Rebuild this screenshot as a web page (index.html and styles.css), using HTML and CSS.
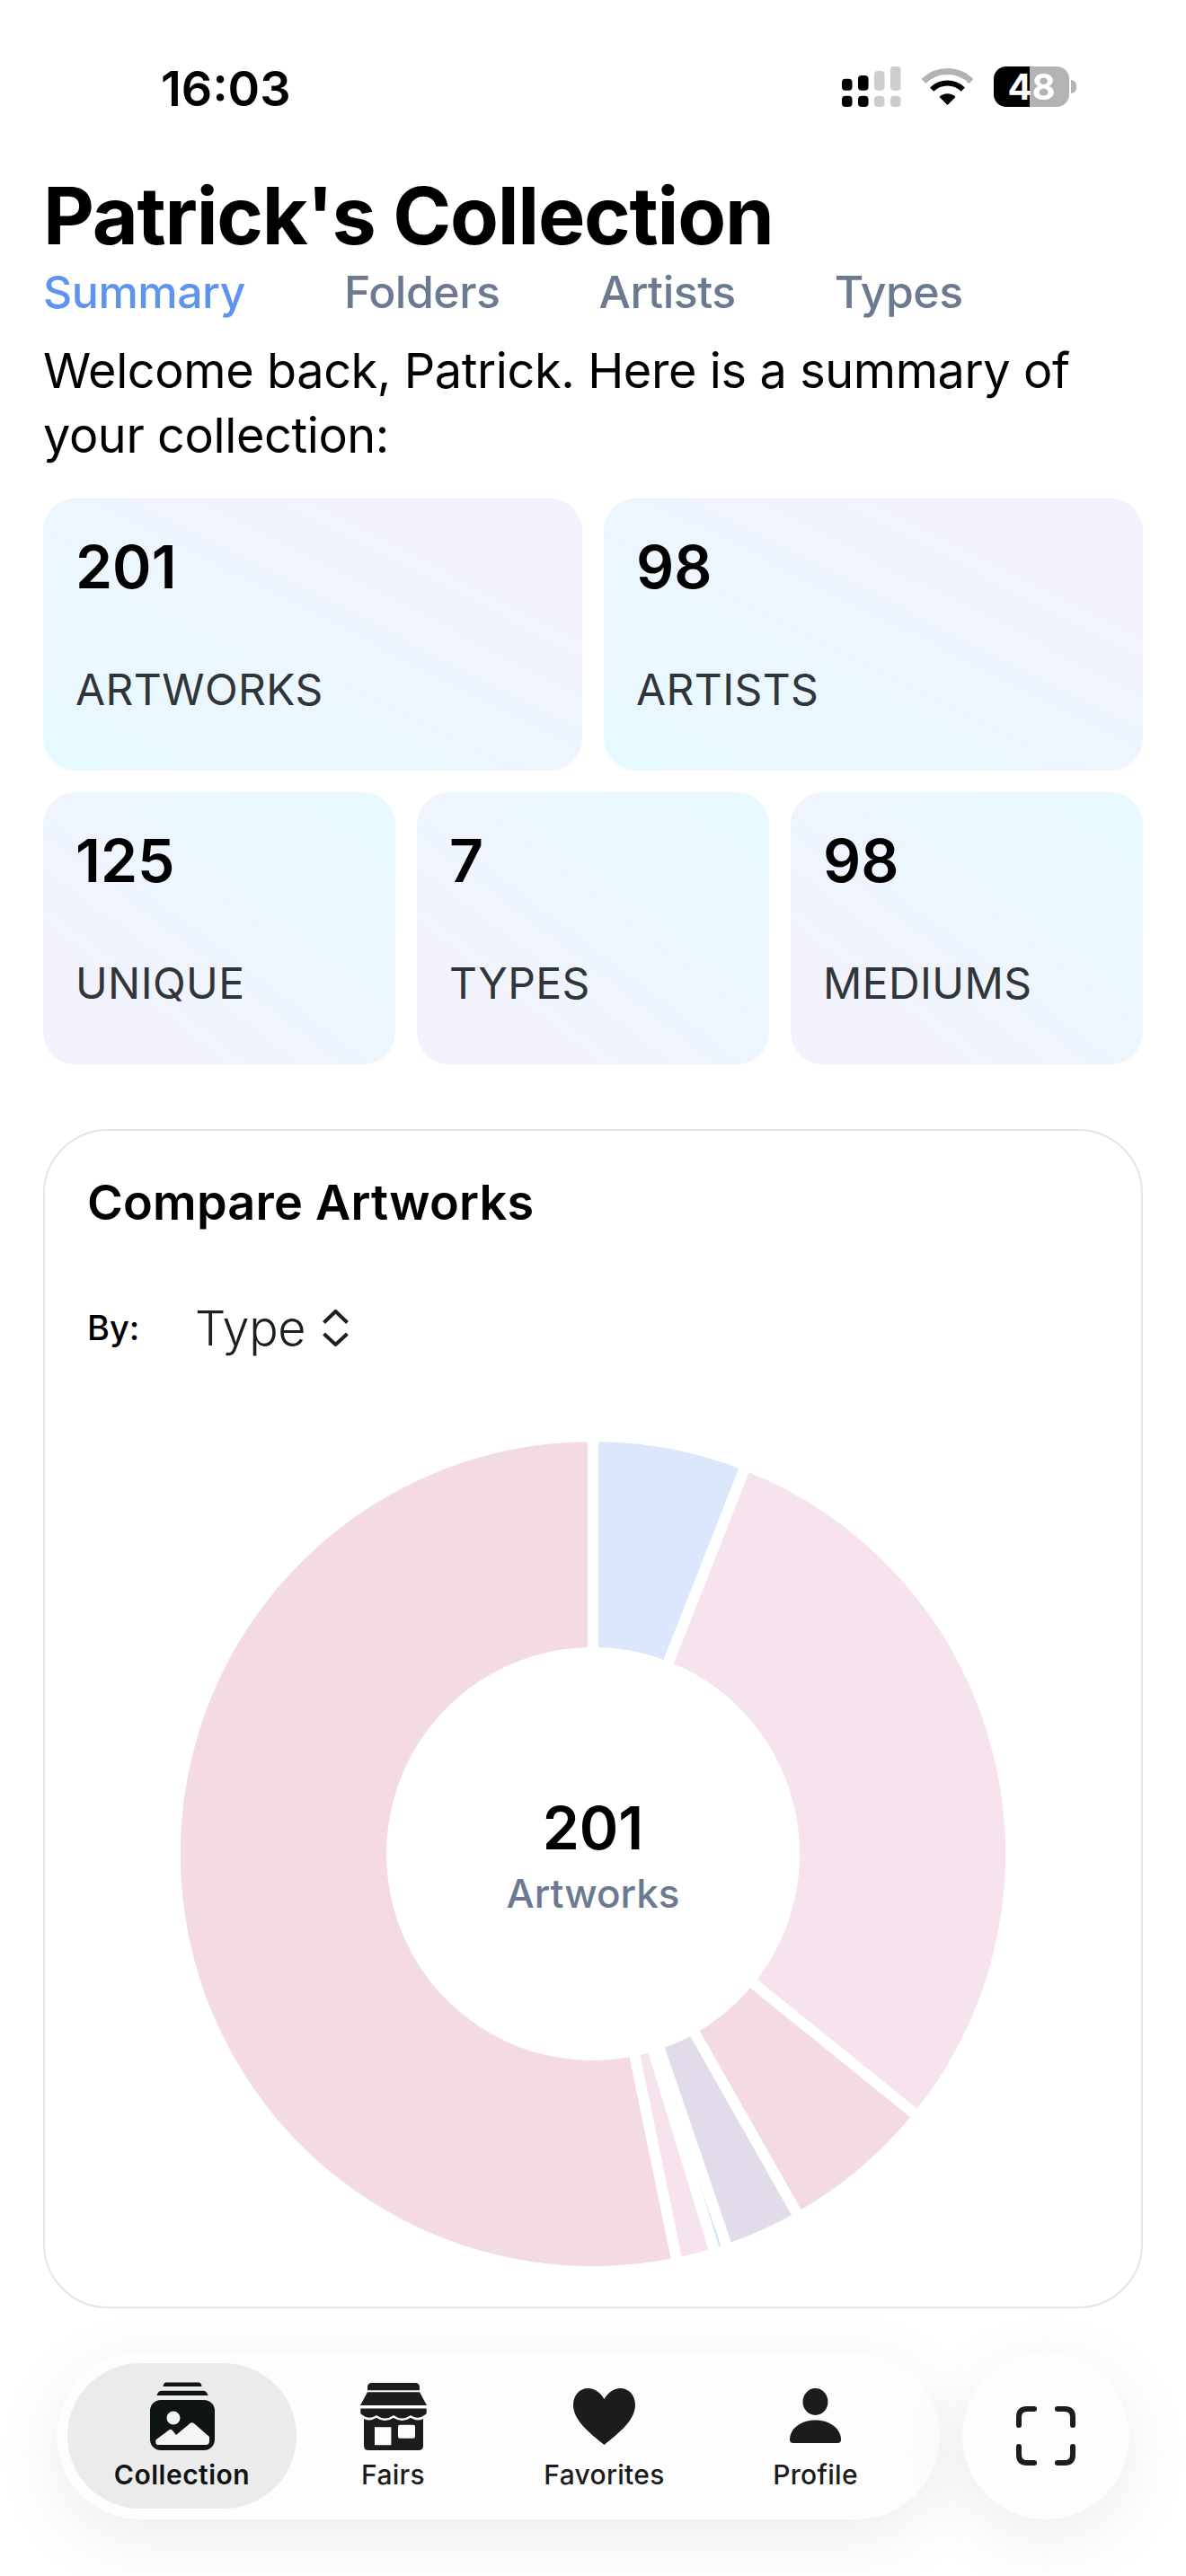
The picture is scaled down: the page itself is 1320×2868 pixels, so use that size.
FILE: index.html
```html
<!DOCTYPE html>
<html lang="en">
<head>
  <meta charset="UTF-8" />
  <meta name="viewport" content="width=device-width, initial-scale=1.0"/>
  <title>Patrick's Collection</title>
  <link rel="stylesheet" href="styles.css">
</head>
<body>
  <div class="status-bar">
    <span class="status-time">16:03</span>
    <div class="status-icons">
      <svg class="signal" width="66" height="45" viewBox="0 0 66 45">
        <rect x="0" y="13.7" width="11.5" height="13" rx="4"/>
        <rect x="18" y="10" width="11.5" height="16.7" rx="4"/>
        <rect class="dim" x="36" y="5" width="11.5" height="21.7" rx="4"/>
        <rect class="dim" x="54" y="0" width="11.5" height="26.7" rx="4"/>
        <rect x="0" y="32.7" width="11.5" height="12.3" rx="4"/>
        <rect x="18" y="32.7" width="11.5" height="12.3" rx="4"/>
        <rect class="dim" x="36" y="32.7" width="11.5" height="12.3" rx="4"/>
        <rect class="dim" x="54" y="32.7" width="11.5" height="12.3" rx="4"/>
      </svg>
      <svg class="wifi" width="57" height="41" viewBox="0 0 57 41">
        <path class="wifi-far" d="M2 14.5A37.5 37.5 0 0 1 55 14.5"/>
        <path class="wifi-near" d="M11.2 23.7A24.5 24.5 0 0 1 45.8 23.7"/>
        <path d="M28.5 41L19.5 32A12.7 12.7 0 0 1 37.5 32Z"/>
      </svg>
      <div class="battery"><span>48</span></div>
    </div>
  </div>

  <h1 class="page-title">Patrick's Collection</h1>
  <nav class="top-tabs">
    <a class="top-tab top-tab-active">Summary</a>
    <a class="top-tab">Folders</a>
    <a class="top-tab">Artists</a>
    <a class="top-tab">Types</a>
  </nav>
  <p class="welcome">Welcome back, Patrick. Here is a summary of your collection:</p>

  <div class="stats stats-two">
    <div class="stat">
      <div class="stat-num">201</div>
      <div class="stat-label">ARTWORKS</div>
    </div>
    <div class="stat">
      <div class="stat-num">98</div>
      <div class="stat-label">ARTISTS</div>
    </div>
  </div>
  <div class="stats stats-three">
    <div class="stat">
      <div class="stat-num">125</div>
      <div class="stat-label">UNIQUE</div>
    </div>
    <div class="stat">
      <div class="stat-num">7</div>
      <div class="stat-label">TYPES</div>
    </div>
    <div class="stat">
      <div class="stat-num">98</div>
      <div class="stat-label">MEDIUMS</div>
    </div>
  </div>

  <section class="compare">
    <h2 class="compare-title">Compare Artworks</h2>
    <div class="compare-by">
      <span class="by-label">By:</span>
      <span class="by-value">Type</span>
      <svg class="by-chevrons" width="29" height="41" viewBox="0 0 29 41">
        <path d="M1.5 14.5L14.5 2L27.5 14.5"/>
        <path d="M1.5 27L14.5 39L27.5 27"/>
      </svg>
    </div>
    <div class="donut">
      <svg width="918" height="918" viewBox="-459 -459 918 918">
        <g class="slices">
          <path class="slice-blue" d="M0 -465A465 465 0 0 1 170.3 -432.7L82.1 -208.4A224 224 0 0 0 0 -224Z"/>
          <path class="slice-pink" d="M170.3 -432.7A465 465 0 0 1 361.6 292.3L174.2 140.8A224 224 0 0 0 82.1 -208.4Z"/>
          <path class="slice-rose" d="M361.6 292.3A465 465 0 0 1 229.3 404.5L110.5 194.9A224 224 0 0 0 174.2 140.8Z"/>
          <path class="slice-lilac" d="M229.3 404.5A465 465 0 0 1 150 440.2L72.2 212A224 224 0 0 0 110.5 194.9Z"/>
          <path class="slice-sky" d="M150 440.2A465 465 0 0 1 136 444.7L65.5 214.2A224 224 0 0 0 72.2 212Z"/>
          <path class="slice-pink" d="M136 444.7A465 465 0 0 1 93.8 455.4L45.2 219.4A224 224 0 0 0 65.5 214.2Z"/>
          <path class="slice-rose" d="M93.8 455.4A465 465 0 1 1 0 -465L0 -224A224 224 0 1 0 45.2 219.4Z"/>
        </g>
      </svg>
      <div class="donut-center">
        <div class="donut-num">201</div>
        <div class="donut-label">Artworks</div>
      </div>
    </div>
  </section>

  <div class="bottom-bar">
    <nav class="tab-bar">
      <a class="tab tab-active">
        <span class="tab-icon">
          <svg width="72" height="76" viewBox="0 0 72 76">
            <path class="ink-dark" d="M14.5 5Q15 .5 18 .5H54Q57 .5 57.5 5Z"/>
            <path class="ink-dark" d="M7.5 15Q9 9.7 13 9.7H59Q63 9.7 64.5 15Z"/>
            <rect class="ink-dark" x="0" y="20" width="72" height="56" rx="12"/>
            <circle class="ink-light" cx="26" cy="40" r="7.5"/>
            <path class="ink-light" d="M9 70Q6 70 6.3 66V64.5L21 53.5Q23 52 25 54L29 59L44 46.5Q47 44 50 47L66 61V66Q66 70 62 70Z"/>
          </svg>
        </span>
        <span class="tab-label">Collection</span>
      </a>
      <a class="tab">
        <span class="tab-icon">
          <svg width="76" height="75" viewBox="0 0 76 75">
            <path class="ink" d="M9 8.3V5Q9 0 14 0H62Q67 0 67 5V8.3Z"/>
            <path class="ink" d="M9 10.3H67L75 25H1Z"/>
            <path class="ink" fill-rule="evenodd" d="M5 38H71V70Q71 75 66 75H10Q5 75 5 70ZM17 49.3V69.3H35.4V49.3ZM45 46.7Q43 46.7 43 48.7V59.7Q43 61.7 45 61.7H60Q62 61.7 62 59.7V48.7Q62 46.7 60 46.7Z"/>
            <path class="ink ink-cut" d="M0 27.3H76V33Q76 36 73 37Q66 43 57 37.5Q47.500 44 38 37.500Q28.500 44 19 37.500Q10 43 3 37Q0 36 0 33Z"/>
          </svg>
        </span>
        <span class="tab-label">Fairs</span>
      </a>
      <a class="tab">
        <span class="tab-icon">
          <svg width="69" height="63" viewBox="0 0 69 63">
            <path class="ink" d="M34.500 63C17 49 0 35 0 18.500C0 8 7 0 16.500 0C23 0 30 4 34.500 12C39 4 46 0 52.500 0C62 0 69 8 69 18.500C69 35 52 49 34.500 63Z"/>
          </svg>
        </span>
        <span class="tab-label">Favorites</span>
      </a>
      <a class="tab">
        <span class="tab-icon">
          <svg width="57" height="62" viewBox="0 0 57 62">
            <ellipse class="ink" cx="28.500" cy="15" rx="14" ry="15"/>
            <path class="ink" d="M0 57C0 46 11 35.500 28.500 35.500C46 35.500 57 46 57 57Q57 61 53 61H4Q0 61 0 57Z"/>
          </svg>
        </span>
        <span class="tab-label">Profile</span>
      </a>
    </nav>
    <button class="scan-btn">
      <svg width="66" height="66" viewBox="0 0 66 66">
        <path class="scan-mark" d="M3 21V12Q3 3 12 3H20M46 3H54Q63 3 63 12V21M63 45V54Q63 63 54 63H46M20 63H12Q3 63 3 54V45"/>
      </svg>
    </button>
  </div>
</body>
</html>
```

FILE: styles.css
```css
* { box-sizing: border-box; }

body {
  margin: 0;
  width: 1320px;
  height: 2868px;
  overflow: hidden;
  padding: 0 48px;
  background: #fff;
  color: #000;
  font-family: Inter, 'Noto Sans', sans-serif;
}

/* status bar */
.status-bar {
  height: 196px;
  padding: 67px 82px 0 131px;
  display: flex;
  justify-content: space-between;
  align-items: flex-start;
}

.status-time {
  font-size: 54px;
  font-weight: 600;
  line-height: 64px;
}

.status-icons {
  display: flex;
  align-items: flex-start;
  gap: 23px;
  padding: 7px 0 0;
}

.signal rect { fill: #000; }
.signal .dim { fill: #cdcdcd; }

.wifi { margin-top: 2px; }
.wifi path { fill: #000; }
.wifi .wifi-far { fill: none; stroke: #b3b3b3; stroke-width: 7; }
.wifi .wifi-near { fill: none; stroke: #000; stroke-width: 6; }

.battery {
  position: relative;
  width: 84px;
  height: 45px;
  border-radius: 14px;
  background: linear-gradient(to right, #000 48%, #b3b3b3 48%);
  color: #fff;
  font-size: 40px;
  font-weight: 700;
  line-height: 45px;
  text-align: center;
}

.battery::after {
  content: "";
  position: absolute;
  top: 15px;
  right: -8px;
  width: 6px;
  height: 15px;
  border-radius: 0 6px 6px 0;
  background: #b3b3b3;
}

/* header */
.page-title {
  margin: 0;
  font-size: 88px;
  font-weight: 700;
  line-height: 88px;
  letter-spacing: -1.25px;
}

.top-tabs {
  display: flex;
  gap: 110px;
  margin-top: 11px;
  height: 60px;
}

.top-tab {
  font-size: 50px;
  font-weight: 500;
  line-height: 60px;
  letter-spacing: -0.5px;
  color: #6b7a90;
}

.top-tab-active { color: #5f94ee; }

.welcome {
  margin: 22px 0 0;
  font-size: 54px;
  line-height: 72px;
  letter-spacing: -0.4px;
}

/* stat cards */
.stats {
  display: grid;
  gap: 24px;
  margin-top: 24px;
}

.stats-two {
  grid-template-columns: 1fr 1fr;
  margin-top: 34px;
}

.stats-three { grid-template-columns: 1fr 1fr 1fr; }

.stat {
  height: 303px;
  padding: 36px;
  border-radius: 36px;
  background: linear-gradient(to top right, #e6faff, #f5f0fc);
}

.stats-three .stat {
  background: linear-gradient(to top right, #f5f0fc, #e6faff);
}

.stat-num {
  font-size: 66px;
  font-weight: 600;
  line-height: 80px;
}

.stat-label {
  margin-top: 61px;
  font-size: 48px;
  font-weight: 400;
  line-height: 72px;
  letter-spacing: 0.4px;
  color: #2f3539;
}

/* compare card */
.compare {
  margin-top: 72px;
  padding: 44px 47px 45px;
  border: 2px solid #e5e5e5;
  border-radius: 72px;
  background: #fff;
}

.compare-title {
  margin: 0;
  font-size: 54px;
  font-weight: 600;
  line-height: 72px;
  letter-spacing: 0.2px;
}

.compare-by {
  display: flex;
  align-items: center;
  margin-top: 67px;
  height: 72px;
}

.by-label {
  width: 120px;
  font-size: 38px;
  font-weight: 500;
}

.by-value {
  font-size: 54px;
  font-weight: 300;
  letter-spacing: -0.4px;
  color: #1a2020;
}

.by-chevrons {
  margin-left: 19px;
  fill: none;
  stroke: #1a2020;
  stroke-width: 4;
}

.donut {
  position: relative;
  width: 918px;
  height: 918px;
  margin: 91px auto 0;
}

.donut svg { display: block; }

.slices path { stroke: #fff; stroke-width: 12; }
.slice-blue { fill: #dbe8fb; }
.slice-pink { fill: #f6e3ed; }
.slice-rose { fill: #f4dae4; }
.slice-lilac { fill: #e2dcea; }
.slice-sky { fill: #cfe2fb; }

.donut-center {
  position: absolute;
  top: 50%;
  left: 50%;
  padding-top: 4px;
  transform: translate(-50%, -50%);
  text-align: center;
}

.donut-num {
  font-size: 66px;
  font-weight: 600;
  line-height: 80px;
}

.donut-label {
  margin-top: 3px;
  font-size: 44px;
  font-weight: 500;
  line-height: 60px;
  color: #6b7a90;
}

/* bottom tab bar */
.bottom-bar {
  display: flex;
  gap: 25px;
  margin: 49px 15px 0;
}

.tab-bar {
  display: grid;
  grid-template-columns: repeat(4, 235px);
  width: 983px;
  height: 186px;
  padding: 12px 0 12px 22px;
  border-radius: 93px;
  background: #fdfdfd;
  box-shadow: 0 20px 80px rgba(0, 0, 0, 0.08);
}

.tab {
  display: flex;
  flex-direction: column;
  align-items: center;
  padding-top: 21px;
  border-radius: 81px;
  color: #1c1c1c;
}

.tab-active {
  margin: 0 -10px;
  background: #ebebeb;
  color: #0f1414;
}

.tab-icon {
  display: flex;
  align-items: center;
  justify-content: center;
  height: 76px;
}

.tab-label {
  margin-top: 9px;
  font-size: 30px;
  font-weight: 500;
  line-height: 36px;
  letter-spacing: 0.3px;
}

.tab-active .tab-label {
  font-weight: 600;
  letter-spacing: 0.5px;
}

.ink { fill: #1c1c1c; }
.ink-dark { fill: #0f1414; }
.ink-light { fill: #f4f4f4; }
.ink-cut { stroke: #fdfdfd; stroke-width: 2.5; }

.scan-btn {
  display: flex;
  align-items: center;
  justify-content: center;
  width: 186px;
  height: 186px;
  padding: 0;
  border: none;
  border-radius: 50%;
  background: #fdfdfd;
  box-shadow: 0 20px 80px rgba(0, 0, 0, 0.08);
}

.scan-mark {
  fill: none;
  stroke: #1c1c1c;
  stroke-width: 6;
  stroke-linecap: round;
}
```
